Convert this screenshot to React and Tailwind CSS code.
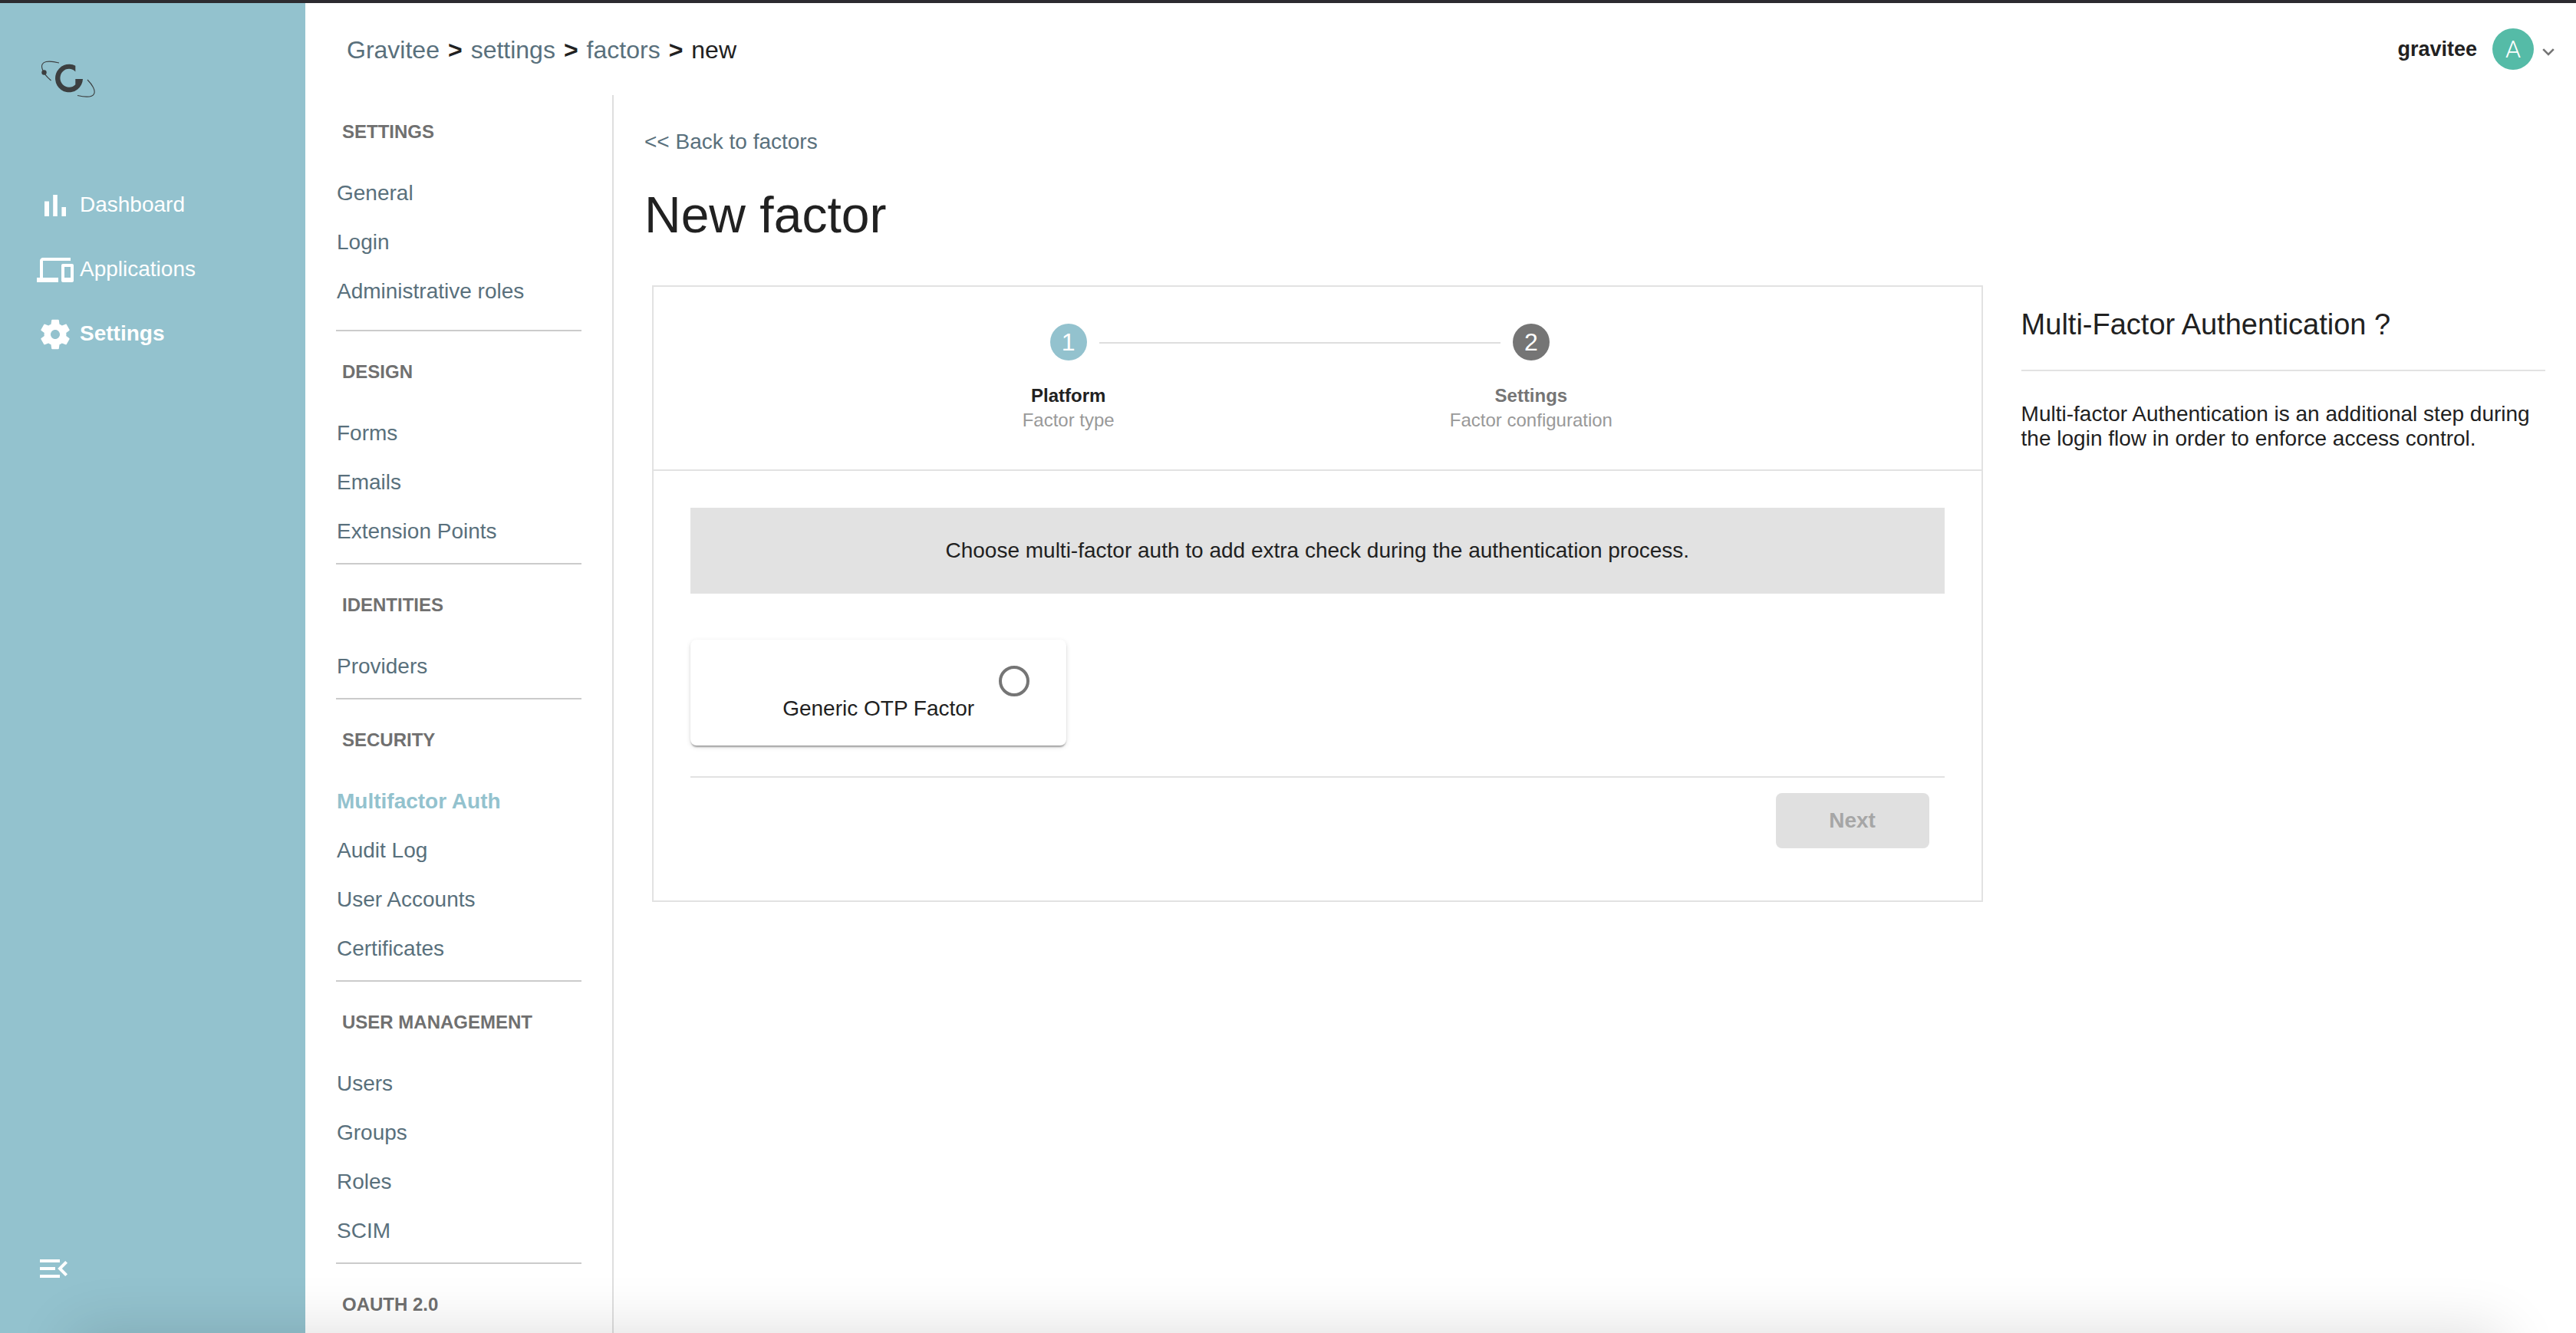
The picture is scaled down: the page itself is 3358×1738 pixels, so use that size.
const primaryNav = [
  {
    label: 'Dashboard',
    path: 'M5 9.2h3V19H5zM10.6 5h2.8v14h-2.8zm5.6 8H19v6h-2.8z',
  },
  {
    label: 'Applications',
    path: 'M4 6h18V4H4c-1.1 0-2 .9-2 2v11H0v3h14v-3H4V6zm19 2h-6c-.55 0-1 .45-1 1v10c0 .55.45 1 1 1h6c.55 0 1-.45 1-1V9c0-.55-.45-1-1-1zm-1 9h-4v-7h4v7z',
  },
  {
    label: 'Settings',
    active: true,
    path: 'M19.14 12.94c.04-.3.06-.61.06-.94 0-.32-.02-.64-.07-.94l2.03-1.58c.18-.14.23-.41.12-.61l-1.92-3.32c-.12-.22-.37-.29-.59-.22l-2.39.96c-.5-.38-1.03-.7-1.62-.94l-.36-2.54c-.04-.24-.24-.41-.48-.41h-3.84c-.24 0-.43.17-.47.41l-.36 2.54c-.59.24-1.13.57-1.62.94l-2.39-.96c-.22-.08-.47 0-.59.22L2.74 8.87c-.12.21-.08.47.12.61l2.03 1.58c-.05.3-.09.63-.09.94s.02.64.07.94l-2.03 1.58c-.18.14-.23.41-.12.61l1.92 3.32c.12.22.37.29.59.22l2.39-.96c.5.38 1.03.7 1.62.94l.36 2.54c.05.24.24.41.48.41h3.84c.24 0 .44-.17.47-.41l.36-2.54c.59-.24 1.13-.56 1.62-.94l2.39.96c.22.08.47 0 .59-.22l1.92-3.32c.12-.22.07-.47-.12-.61l-2.01-1.58zM12 15c-1.65 0-3-1.35-3-3s1.35-3 3-3 3 1.35 3 3-1.35 3-3 3z',
  },
];

const sections = [
  { title: 'SETTINGS', items: ['General', 'Login', 'Administrative roles'] },
  { title: 'DESIGN', items: ['Forms', 'Emails', 'Extension Points'] },
  { title: 'IDENTITIES', items: ['Providers'] },
  { title: 'SECURITY', items: ['Multifactor Auth', 'Audit Log', 'User Accounts', 'Certificates'] },
  { title: 'USER MANAGEMENT', items: ['Users', 'Groups', 'Roles', 'SCIM'] },
  { title: 'OAUTH 2.0', items: [] },
];

function Logo() {
  return (
    <svg viewBox="0 0 70 48" className="h-12 w-[70px] text-[#3c3f40]" role="img" aria-label="Gravitee">
      <path
        d="M44.3 6.8A18 18.3 0 1 0 54 24H44.3V31.2A11.6 12 0 1 1 44.3 14.4Z"
        fill="currentColor"
      />
      <path
        d="M23 3C10 -.3 -2 0 1 10.500C2.500 16 6 20.500 12.500 26M60 25C66 31 71 39 68.500 43.500C66 48.500 56 47.500 47 45.500"
        fill="none"
        stroke="currentColor"
        strokeWidth="1.1"
      />
      <circle cx="3.500" cy="15.500" r="3.200" fill="currentColor" />
    </svg>
  );
}

function Sidebar() {
  return (
    <aside className="flex w-[398px] shrink-0 flex-col bg-[#93c2ce] px-12 text-white">
      <a href="#home" className="mt-[75px] ml-1.5 self-start">
        <Logo />
      </a>
      <nav aria-label="Main" className="mt-[117px] flex flex-col gap-9">
        {primaryNav.map(({ label, path, active }) => (
          <a key={label} href="#nav" className="flex items-center gap-2">
            <svg viewBox="0 0 24 24" className="size-12 shrink-0 fill-current" aria-hidden="true">
              <path d={path} />
            </svg>
            <span className={active ? 'pb-0.5 text-[28px] leading-8 font-bold' : 'pb-0.5 text-[28px] leading-8'}>
              {label}
            </span>
          </a>
        ))}
      </nav>
      <button type="button" aria-label="Collapse menu" className="mt-auto mb-[60px] -ml-0.5 self-start">
        <svg viewBox="0 0 24 24" className="size-12 fill-current" aria-hidden="true">
          <path d="M3 18h13v-2H3v2zM3 13h10v-2H3v2zm0-7v2h13V6H3zm18 9.59L17.42 12 21 8.41 19.59 7l-5 5 5 5L21 15.59z" />
        </svg>
      </button>
    </aside>
  );
}

function Header() {
  return (
    <header className="flex h-[120px] shrink-0 items-center justify-between pr-7 pl-[54px]">
      <nav aria-label="Breadcrumb" className="flex gap-[11px] pt-0.5 text-[32px] leading-10 text-[#59707c]">
        <a href="#gravitee">Gravitee</a>
        <b className="text-[#212121]">&gt;</b>
        <a href="#settings">settings</a>
        <b className="text-[#212121]">&gt;</b>
        <a href="#factors">factors</a>
        <b className="text-[#212121]">&gt;</b>
        <span className="text-[#212121]">new</span>
      </nav>
      <button type="button" className="flex items-center">
        <span className="text-[27px] leading-8 font-bold text-[#212121]">gravitee</span>
        <span className="ml-5 flex size-[54px] items-center justify-center rounded-full bg-[#55bba7] font-[Roboto,sans-serif] text-[32px] leading-8 font-light text-white">
          A
        </span>
        <svg viewBox="0 0 16 10" className="mt-2 ml-[11px] h-2.5 w-4" aria-hidden="true">
          <path d="M1.200 1.200 8 8l6.800-6.800" fill="none" stroke="#757575" strokeWidth="2.600" />
        </svg>
      </button>
    </header>
  );
}

function SettingsMenu() {
  return (
    <nav aria-label="Settings" className="w-[402px] shrink-0 overflow-hidden border-r-2 border-[#dedede] pt-1 pr-10 pl-10">
      {sections.map(({ title, items }) => (
        <section
          key={title}
          className="border-b-2 border-[#cbcbcb] pt-[9px] pb-[9px] first:pt-0 first:pb-[18px] last:border-b-0 last:pb-0"
        >
          <h2 className="pb-1 pl-2 text-2xl leading-[88px] font-bold text-[#707070]">{title}</h2>
          {items.length > 0 && (
            <ul className="pl-px">
              {items.map((item) => (
                <li key={item} className="text-[28px] leading-[64px]">
                  <a
                    href="#menu"
                    className={item === 'Multifactor Auth' ? 'font-bold text-[#93c2ce]' : 'text-[#59707c]'}
                  >
                    {item}
                  </a>
                </li>
              ))}
            </ul>
          )}
        </section>
      ))}
    </nav>
  );
}

function Stepper() {
  return (
    <ol className="mx-auto flex w-1/2 pt-12 pb-12 text-center text-2xl leading-8">
      <li className="pl-12">
        <div className="flex items-center">
          <span className="flex-1" />
          <span className="mr-4 ml-4 flex size-12 items-center justify-center rounded-full bg-[#93c2ce] text-[32px] text-white">
            1
          </span>
          <span className="mt-0.5 h-0.5 flex-1 bg-[#dedede]" />
        </div>
        <p className="mt-[30px] font-bold text-[#212121]">Platform</p>
        <p className="text-[#999999]">Factor type</p>
      </li>
      <li aria-hidden="true" className="mt-6 h-0.5 flex-1 bg-[#dedede]" />
      <li className="pr-12">
        <div className="flex items-center">
          <span className="mt-0.5 h-0.5 flex-1 bg-[#dedede]" />
          <span className="mr-4 ml-4 flex size-12 items-center justify-center rounded-full bg-[#757575] text-[32px] text-white">
            2
          </span>
          <span className="flex-1" />
        </div>
        <p className="mt-[30px] font-bold text-[#757575]">Settings</p>
        <p className="text-[#999999]">Factor configuration</p>
      </li>
    </ol>
  );
}

function FactorForm() {
  return (
    <form className="mx-2.5 w-[70%] shrink-0 border-2 border-[#e2e2e2]" onSubmit={(e) => e.preventDefault()}>
      <Stepper />
      <div className="border-t-2 border-[#e2e2e2] px-12 pt-12 pb-[68px]">
        <p className="bg-[#e2e2e2] py-10 text-center text-[28px] leading-8">
          Choose multi-factor auth to add extra check during the authentication process.
        </p>
        <label className="mt-[60px] flex w-[30%] flex-col rounded-lg bg-white pt-[34px] pb-8 shadow-[0_4px_2px_-2px_rgba(0,0,0,0.2),0_2px_2px_0_rgba(0,0,0,0.14),0_2px_6px_0_rgba(0,0,0,0.12)]">
          <input
            type="radio"
            name="factor"
            className="mr-12 size-10 appearance-none self-end rounded-full border-4 border-[#757575] checked:bg-[#93c2ce]"
          />
          <span className="text-center text-[28px] leading-8">Generic OTP Factor</span>
        </label>
        <div className="mt-10 flex justify-end border-t-2 border-[#e2e2e2] pt-5 pr-5">
          <button type="submit" disabled className="h-[72px] w-[200px] rounded-lg bg-[#e0e0e0] text-[28px] font-bold text-[#a6a6a6]">
            Next
          </button>
        </div>
      </div>
    </form>
  );
}

export default function App() {
  return (
    <div className="relative flex h-screen overflow-hidden border-t-4 border-[#2c2b30] bg-white font-['Liberation_Sans',Arial,sans-serif] text-[#212121]">
      <Sidebar />
      <div className="flex min-w-0 flex-1 flex-col">
        <Header />
        <div className="flex min-h-0 flex-1">
          <SettingsMenu />
          <main className="min-w-0 flex-1 pt-11 pr-10 pl-10">
            <a href="#factors" className="block text-[28px] leading-[34px] text-[#59707c]">
              &lt;&lt; Back to factors
            </a>
            <h1 className="mt-[38px] text-[66px] leading-[80px]">New factor</h1>
            <div className="mt-[52px] flex items-start">
              <FactorForm />
              <aside className="ml-10 flex-1 pt-[27px]">
                <h2 className="border-b-2 border-[#e2e2e2] pb-[35px] text-[38px] leading-[48px]">
                  Multi-Factor Authentication ?
                </h2>
                <p className="mt-10 text-[28px] leading-8">
                  Multi-factor Authentication is an additional step during the login flow in order to enforce access
                  control.
                </p>
              </aside>
            </div>
          </main>
        </div>
      </div>
      <div aria-hidden="true" className="pointer-events-none absolute inset-x-0 bottom-0 h-24 overflow-hidden">
        <div className="mx-24 mt-24 h-24 shadow-[0_0_80px_rgba(0,0,0,0.14)]" />
      </div>
    </div>
  );
}
